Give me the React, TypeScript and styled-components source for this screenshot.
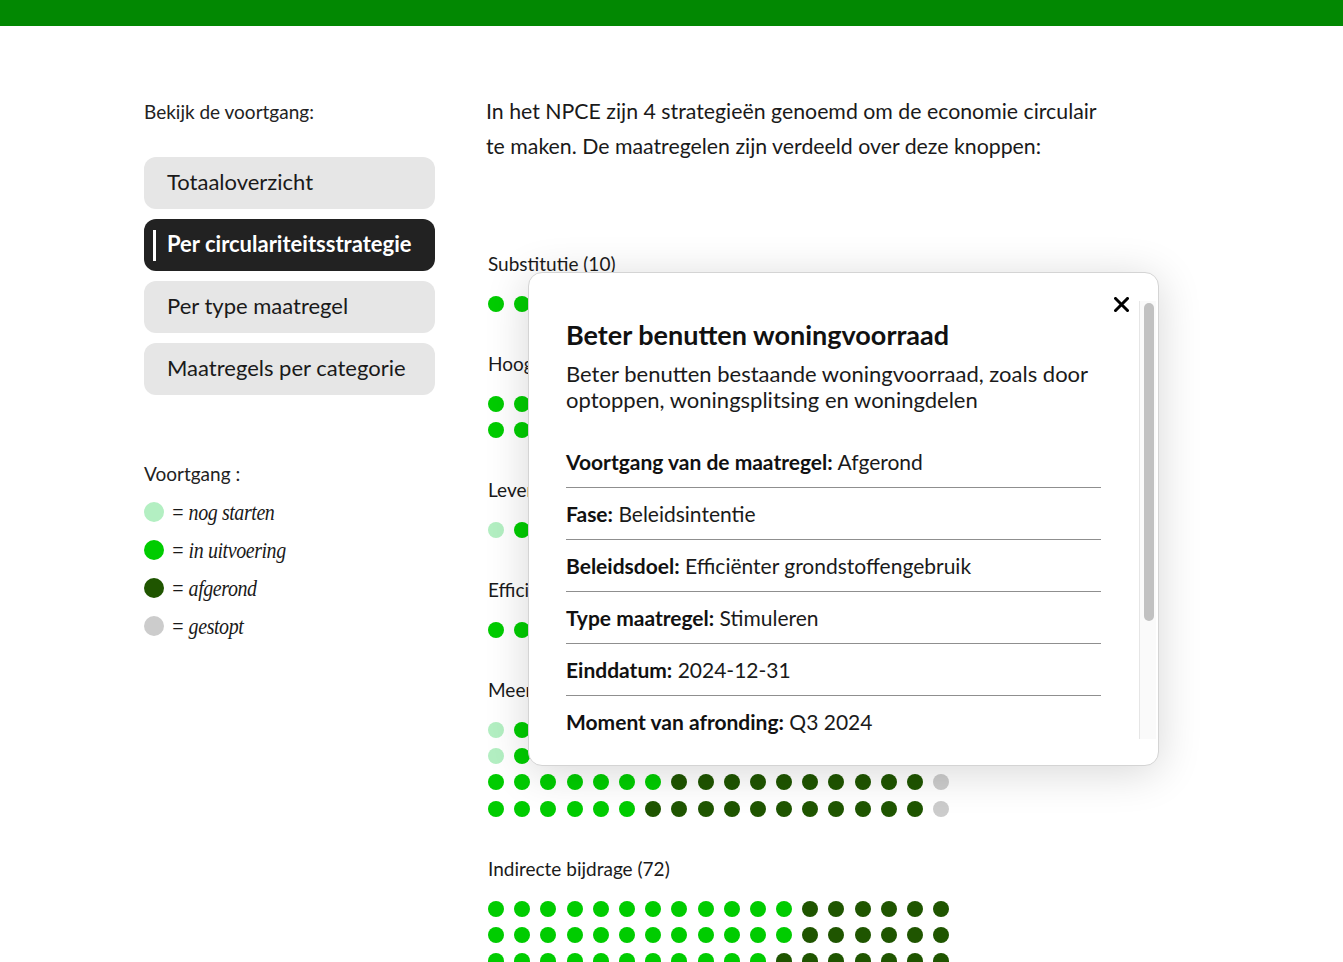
import React from 'react';
import styled, { createGlobalStyle } from 'styled-components';

type Status = 'todo' | 'busy' | 'done' | 'stopped';

const COLORS: Record<Status, string> = {
  todo: '#b3efc2',
  busy: '#00cc00',
  done: '#1f5500',
  stopped: '#cccccc',
};

// counts per status, dots are filled column by column
const sections = [
  { name: 'Substitutie', counts: [0, 3, 7, 0] },
  { name: 'Hoogwaardige verwerking', counts: [0, 14, 14, 2] },
  { name: 'Levensduurverlenging', counts: [1, 6, 7, 0] },
  { name: 'Efficiënter grondstoffengebruik', counts: [0, 5, 7, 0] },
  { name: 'Meerdere strategieën', counts: [2, 25, 43, 2] },
  { name: 'Indirecte bijdrage', counts: [0, 46, 26, 0] },
];

const ORDER: Status[] = ['todo', 'busy', 'done', 'stopped'];

const menu = ['Totaaloverzicht', 'Per circulariteitsstrategie', 'Per type maatregel', 'Maatregels per categorie'];

const legend: { status: Status; label: string }[] = [
  { status: 'todo', label: 'nog starten' },
  { status: 'busy', label: 'in uitvoering' },
  { status: 'done', label: 'afgerond' },
  { status: 'stopped', label: 'gestopt' },
];

const details = [
  ['Voortgang van de maatregel:', 'Afgerond'],
  ['Fase:', 'Beleidsintentie'],
  ['Beleidsdoel:', 'Efficiënter grondstoffengebruik'],
  ['Type maatregel:', 'Stimuleren'],
  ['Einddatum:', '2024-12-31'],
  ['Moment van afronding:', 'Q3 2024'],
];

function App() {
  return (
    <>
      <GlobalStyle />
      <TopBar />
      <Page>
        <Sidebar>
          <SideLabel>Bekijk de voortgang:</SideLabel>
          <Menu>
            {menu.map((item, i) => (
              <MenuButton key={item} $active={i === 1}>
                {i === 1 && <ActiveBar />}
                {item}
              </MenuButton>
            ))}
          </Menu>
          <LegendTitle>Voortgang :</LegendTitle>
          <Legend>
            {legend.map((l) => (
              <LegendRow key={l.status}>
                <LegendDot $color={COLORS[l.status]} />
                <LegendText>= {l.label}</LegendText>
              </LegendRow>
            ))}
          </Legend>
        </Sidebar>

        <Content>
          <Intro>
            In het NPCE zijn 4 strategieën genoemd om de economie circulair te maken. De maatregelen zijn verdeeld over deze knoppen:
          </Intro>
          <Sections>
            {sections.map((s) => {
              const total = s.counts.reduce((a, b) => a + b, 0);
              const rows = Math.ceil(total / 18);
              const dots: Status[] = [];
              s.counts.forEach((c, i) => {
                for (let k = 0; k < c; k++) dots.push(ORDER[i]);
              });
              return (
                <Section key={s.name}>
                  <SectionLabel>
                    {s.name} ({total})
                  </SectionLabel>
                  <DotGrid $rows={rows}>
                    {dots.map((d, i) => (
                      <Dot key={i} $color={COLORS[d]} />
                    ))}
                  </DotGrid>
                </Section>
              );
            })}
          </Sections>
        </Content>

        <Modal>
          <CloseButton type="button" aria-label="Sluiten">
            <svg width="15" height="15" viewBox="0 0 15 15">
              <path d="M1.5 1.5 L13.5 13.5 M13.5 1.5 L1.5 13.5" stroke="#000" strokeWidth="3" strokeLinecap="square" />
            </svg>
          </CloseButton>
          <ModalScroll>
            <ModalTitle>Beter benutten woningvoorraad</ModalTitle>
            <ModalText>Beter benutten bestaande woningvoorraad, zoals door optoppen, woningsplitsing en woningdelen</ModalText>
            <DetailList>
              {details.map(([k, v]) => (
                <DetailRow key={k}>
                  <strong>{k}</strong> {v}
                </DetailRow>
              ))}
            </DetailList>
          </ModalScroll>
          <ScrollTrack>
            <ScrollThumb />
          </ScrollTrack>
        </Modal>
      </Page>
    </>
  );
}

const GlobalStyle = createGlobalStyle`
  body {
    margin: 0;
    background: #fff;
    color: #1a1a1a;
    font-family: Lato, "Noto Sans", sans-serif;
  }
`;

const TopBar = styled.div`
  height: 26px;
  background: #028802;
`;

const Page = styled.div`
  position: relative;
  display: flex;
  gap: 51px;
  padding: 68px 0 0 144px;
  height: 868px;
  overflow: hidden;
`;

const Sidebar = styled.div`
  width: 291px;
  flex-shrink: 0;
`;

const SideLabel = styled.div`
  margin-top: 6px;
  font-size: 19px;
  line-height: 24px;
  color: #222;
`;

const Menu = styled.div`
  display: flex;
  flex-direction: column;
  gap: 10px;
  margin-top: 33px;
`;

const MenuButton = styled.button<{ $active?: boolean }>`
  display: flex;
  align-items: center;
  height: 52px;
  padding: 0 0 3px ${(p) => (p.$active ? '9px' : '23px')};
  border: none;
  border-radius: 12px;
  background: ${(p) => (p.$active ? '#222222' : '#e6e6e6')};
  color: ${(p) => (p.$active ? '#ffffff' : '#1a1a1a')};
  font-family: Lato, "Noto Sans", sans-serif;
  font-size: 22px;
  font-weight: ${(p) => (p.$active ? 700 : 400)};
  text-align: left;
  cursor: pointer;
`;

const ActiveBar = styled.span`
  width: 3px;
  height: 31px;
  margin: 3px 11px 0 0;
  background: #fff;
`;

const LegendTitle = styled.div`
  margin-top: 67px;
  font-size: 19px;
  line-height: 24px;
  color: #222;
`;

const Legend = styled.div`
  display: flex;
  flex-direction: column;
  margin-top: 7px;
`;

const LegendRow = styled.div`
  display: flex;
  align-items: center;
  gap: 7px;
  height: 38px;
`;

const LegendDot = styled.span<{ $color: string }>`
  width: 20px;
  height: 20px;
  border-radius: 50%;
  background: ${(p) => p.$color};
`;

const LegendText = styled.span`
  display: inline-block;
  font-family: "Liberation Serif", serif;
  font-style: italic;
  font-size: 23.5px;
  letter-spacing: -0.5px;
  color: #1a1a1a;
  transform: scaleX(0.85);
  transform-origin: left center;
`;

const Content = styled.div`
  width: 620px;
`;

const Intro = styled.p`
  margin: 0;
  font-size: 21.3px;
  line-height: 35px;
  color: #1a1a1a;
`;

const Sections = styled.div`
  display: flex;
  flex-direction: column;
  gap: 40px;
  margin-top: 87.5px;
  padding-left: 2px;
`;

const Section = styled.div`
  display: flex;
  flex-direction: column;
  gap: 20px;
`;

const SectionLabel = styled.div`
  font-size: 19px;
  line-height: 24px;
  color: #1a1a1a;
`;

const DotGrid = styled.div<{ $rows: number }>`
  display: grid;
  grid-auto-flow: column;
  grid-template-rows: repeat(${(p) => p.$rows}, 16px);
  grid-auto-columns: 16px;
  column-gap: 10.2px;
  row-gap: 10.3px;
`;

const Dot = styled.span<{ $color: string }>`
  width: 16px;
  height: 16px;
  border-radius: 50%;
  background: ${(p) => p.$color};
`;

const Modal = styled.div`
  position: absolute;
  top: 246px;
  left: 528px;
  width: 631px;
  height: 494px;
  display: flex;
  padding: 28px 2px 26px 0;
  box-sizing: border-box;
  background: #fff;
  border: 1px solid #d4d4d4;
  border-radius: 14px;
  box-shadow: 0 6px 44px rgba(0, 0, 0, 0.16);
`;

const CloseButton = styled.button`
  position: absolute;
  top: 24px;
  right: 29px;
  display: flex;
  padding: 0;
  border: none;
  background: none;
  cursor: pointer;
  z-index: 2;
`;

const ModalScroll = styled.div`
  flex: 1;
  overflow: hidden;
  padding: 17px 38px 0 37px;
`;

const ScrollTrack = styled.div`
  width: 17px;
  flex-shrink: 0;
  padding: 2px 2px 0 4px;
  box-sizing: border-box;
  background: #fafafa;
  border-left: 1px solid #e6e6e6;
`;

const ScrollThumb = styled.div`
  height: 318px;
  border-radius: 5px;
  background: #c1c1c1;
`;

const ModalTitle = styled.h2`
  margin: 0;
  font-size: 27px;
  line-height: 34px;
  font-weight: 700;
  color: #111;
`;

const ModalText = styled.p`
  margin: 9px 0 0;
  font-size: 22px;
  line-height: 26px;
  color: #1a1a1a;
`;

const DetailList = styled.div`
  margin-top: 23px;
`;

const DetailRow = styled.div`
  padding: 13px 0 12px;
  font-size: 21px;
  line-height: 26px;
  color: #1a1a1a;
  border-bottom: 1px solid #8f8f8f;

  strong {
    font-weight: 700;
    color: #111;
  }
`;

export default App;
